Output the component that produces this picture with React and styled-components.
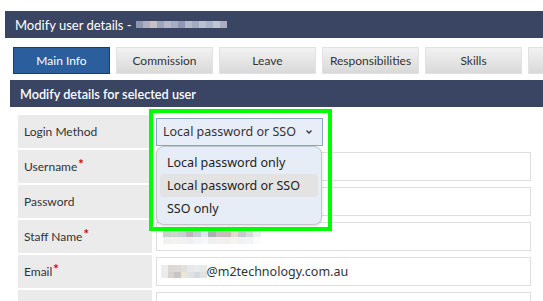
import React from "react";
import styled, { createGlobalStyle } from "styled-components";

const Global = createGlobalStyle`
  html, body { margin: 0; padding: 0; background: #fff; }
  body { font-family: Lato, "Liberation Sans", sans-serif; overflow: hidden; width: 543px; height: 301px; }
`;

const Page = styled.div`
  padding: 11px 0 0 5px;
  width: 538px;
  height: 290px;
  overflow: hidden;
`;

const TitleBar = styled.div`
  height: 27px;
  background: #3a4563;
  color: #fff;
  font-size: 13px;
  display: flex;
  align-items: center;
  padding-left: 10px;
  gap: 4px;
`;

const Tabs = styled.div`
  display: flex;
  gap: 6px;
  padding: 9px 0 0 8px;
  overflow: hidden;
`;

const Tab = styled.div`
  flex: 0 0 97px;
  height: 27px;
  box-sizing: border-box;
  display: flex;
  align-items: center;
  justify-content: center;
  font-size: 12px;
  color: ${(p) => (p.$active ? "#fff" : "#333")};
  background: ${(p) =>
    p.$active ? "#2b5e9c" : "linear-gradient(#f2f2f2, #d9d9d9)"};
  border: 1px solid ${(p) => (p.$active ? "#1c3d66" : "#e2e2e2")};
`;

const SectionBar = styled.div`
  margin: 6px 0 0 5px;
  height: 27px;
  background: #3a4563;
  color: #fff;
  font-size: 12.7px;
  font-weight: 600;
  display: flex;
  align-items: center;
  padding-left: 10px;
`;

const Rows = styled.div`
  display: flex;
  flex-direction: column;
  gap: 2px;
  padding: 8px 0 0 13px;
`;

const Row = styled.div`
  display: flex;
  height: 33px;
  gap: 4px;
`;

const Label = styled.div`
  flex: 0 0 134px;
  box-sizing: border-box;
  background: #ebebeb;
  color: #333;
  font-size: 12px;
  padding: 0 6px;
  display: flex;
  align-items: center;
`;

const Star = styled.span`
  color: #d40000;
  font-size: 13px;
  font-weight: 700;
  align-self: flex-start;
  margin-top: 8px;
  margin-left: 1px;
  line-height: 1;
`;

const Field = styled.div`
  flex: 0 0 375px;
  display: flex;
  align-items: center;
  position: relative;
`;

const Input = styled.div`
  width: 100%;
  height: 29px;
  box-sizing: border-box;
  border: 1px solid #dedede;
  display: flex;
  align-items: center;
  padding-left: ${(p) => p.$pad || 4}px;
  font-family: "Noto Sans", sans-serif;
  font-size: 12.5px;
  color: #333;
`;

const Highlight = styled.div`
  position: absolute;
  left: -7px;
  top: -6px;
  width: 183px;
  height: 122px;
  box-sizing: border-box;
  border: 4px solid #00ff00;
  z-index: 2;
  pointer-events: none;
`;

const Select = styled.div`
  width: 167px;
  height: 28px;
  box-sizing: border-box;
  background: #e8eef7;
  border: 1px solid #8ea6bd;
  display: flex;
  align-items: center;
  justify-content: space-between;
  padding: 0 8px 0 6px;
  font-family: "Noto Sans", sans-serif;
  font-size: 12.5px;
  color: #333;
  margin-right: auto;
`;

const Menu = styled.div`
  position: absolute;
  left: 0;
  top: 31px;
  width: 166px;
  box-sizing: border-box;
  background: #e6edf7;
  border: 1px solid #c3c7cc;
  border-radius: 8px;
  padding: 4px 3px;
  box-shadow: 0 1px 3px rgba(0, 0, 0, 0.15);
  z-index: 3;
  font-family: "Noto Sans", sans-serif;
  font-size: 12.5px;
  color: #222;
`;

const Option = styled.div`
  height: 23px;
  display: flex;
  align-items: center;
  padding-left: 7px;
  border-radius: 4px;
  background: ${(p) => (p.$sel ? "#e3e3e3" : "transparent")};
`;

const Mosaic = styled.div`
  display: grid;
  grid-template-columns: repeat(${(p) => p.$cols}, ${(p) => p.$cell}px);
  grid-auto-rows: ${(p) => p.$cell}px;
`;

const Cell = styled.span`
  background: ${(p) => p.$c};
`;

const titleBlur = ["#8d96b0","#aeb0c2","#c9c0c6","#9da5bd","#b7b9cb","#a7adc3","#8f97b3","#b4b8c9","#a0abc2","#b9c1d2","#aab4c8","#c2c5d2","#a9aec3"];
const staffTop = ["#c8d2cc","#cfd6cc","#c7d0d6","#bfb6bf","#c5ccd6","#dce5f0","#aab0b3","#c7bfbf","#c9bcba","#e2dccb","#c5cbd0","#d6dbde","#eef0f2"];
const staffBot = ["#f0f2f0","#f3f4f2","#f1f2f4","#f1eff2","#f3f4f6","#f6f8fb","#eff0f0","#f2f0f0","#f2efef","#f6f4f0","#f1f2f3","#f3f4f5","#fbfbfb"];
const mailTop = ["#eeeded","#ddd8d6","#dddad8","#e2e0dc","#e8e8ea","#e9ecef","#e6e9e8"];
const mailBot = ["#ececec","#d8d3d1","#c9c5c3","#ece6d6","#dfe2e6","#d7dadc","#dfe3e1"];

function Pixels({ rows, cell }) {
  return (
    <Mosaic $cols={rows[0].length} $cell={cell}>
      {rows.flat().map((c, i) => (
        <Cell key={i} $c={c} />
      ))}
    </Mosaic>
  );
}

export default function App() {
  return (
    <>
      <Global />
      <Page>
        <TitleBar>
          <span>Modify user details -</span>
          <Pixels rows={[titleBlur]} cell={7} />
        </TitleBar>
        <Tabs>
          <Tab $active>Main Info</Tab>
          <Tab>Commission</Tab>
          <Tab>Leave</Tab>
          <Tab>Responsibilities</Tab>
          <Tab>Skills</Tab>
          <Tab />
        </Tabs>
        <SectionBar>Modify details for selected user</SectionBar>
        <Rows>
          <Row>
            <Label>Login Method</Label>
            <Field>
              <Select>
                <span>Local password or SSO</span>
                <svg width="10" height="10" viewBox="0 0 10 10">
                  <path d="M2.5 3.5 L5 6 L7.5 3.5" fill="none" stroke="#333" strokeWidth="1.3" />
                </svg>
              </Select>
              <Highlight />
              <Menu>
                <Option>Local password only</Option>
                <Option $sel>Local password or SSO</Option>
                <Option>SSO only</Option>
              </Menu>
            </Field>
          </Row>
          <Row>
            <Label>Username<Star>*</Star></Label>
            <Field><Input /></Field>
          </Row>
          <Row>
            <Label>Password</Label>
            <Field><Input /></Field>
          </Row>
          <Row>
            <Label>Staff Name<Star>*</Star></Label>
            <Field>
              <Input $pad={6}>
                <Pixels rows={[staffTop, staffBot]} cell={7.5} />
              </Input>
            </Field>
          </Row>
          <Row>
            <Label>Email<Star>*</Star></Label>
            <Field>
              <Input>
                <Pixels rows={[mailTop, mailBot]} cell={6.5} />
                <span>@m2technology.com.au</span>
              </Input>
            </Field>
          </Row>
          <Row>
            <Label />
            <Field><Input /></Field>
          </Row>
        </Rows>
      </Page>
    </>
  );
}
